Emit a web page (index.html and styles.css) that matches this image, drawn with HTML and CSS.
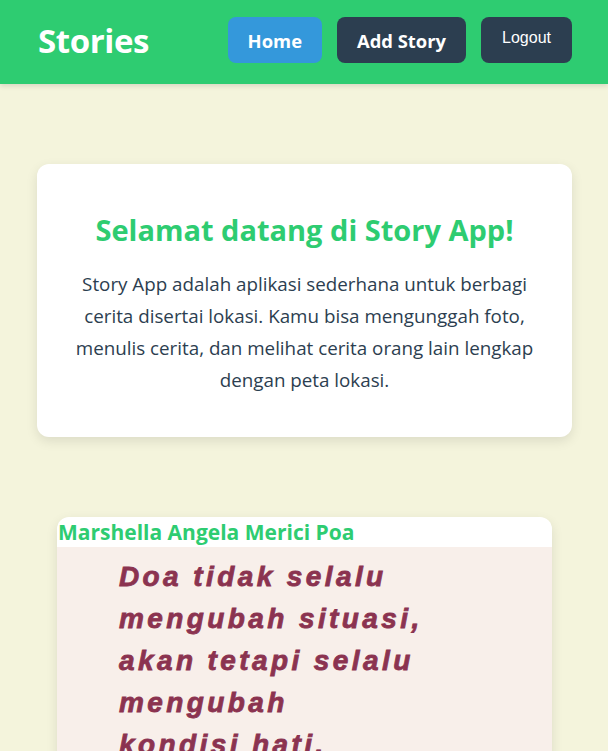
FILE: index.html
```html
<!DOCTYPE html>
<html lang="id">
<head>
<meta charset="utf-8">
<title>Stories</title>
<link rel="stylesheet" href="styles.css">
</head>
<body>
<header class="topbar">
  <div class="brand">Stories</div>
  <nav class="nav">
    <a class="nav-link nav-home" href="#">Home</a>
    <a class="nav-link nav-add" href="#">Add Story</a>
    <button class="nav-logout" type="button">Logout</button>
  </nav>
</header>
<main class="main">
  <section class="welcome">
    <h1 class="welcome-title">Selamat datang di Story App!</h1>
    <p class="welcome-text">Story App adalah aplikasi sederhana untuk berbagi cerita disertai lokasi. Kamu bisa mengunggah foto, menulis cerita, dan melihat cerita orang lain lengkap dengan peta lokasi.</p>
  </section>
  <article class="story">
    <h2 class="story-name">Marshella Angela Merici Poa</h2>
    <div class="story-photo">
      <p class="quote">Doa tidak selalu<br>mengubah situasi,<br>akan tetapi selalu<br>mengubah<br>kondisi hati.</p>
    </div>
  </article>
</main>
</body>
</html>
```
FILE: styles.css
```css
* { box-sizing: border-box; }
html, body { margin: 0; padding: 0; }
body {
  background: #f4f4dc;
  font-family: "Open Sans", "Noto Sans", sans-serif;
  color: #2c3e50;
  overflow: hidden;
}
.topbar {
  height: 84px;
  background: #2ecc71;
  display: flex;
  align-items: center;
  justify-content: space-between;
  padding: 0 36px 4px 38px;
  box-shadow: 0 2px 5px rgba(0,0,0,0.12);
}
.brand {
  color: #fff;
  font-weight: 700;
  font-size: 33px;
  letter-spacing: -0.4px;
}
.nav { display: flex; align-items: center; gap: 15px; }
.nav-link {
  display: flex;
  align-items: center;
  justify-content: center;
  height: 46px;
  padding: 0 20px;
  border-radius: 8px;
  color: #fff;
  text-decoration: none;
  font-weight: 700;
  font-size: 18.4px;
  white-space: nowrap;
}
.nav-home { background: #3498db; }
.nav-add { background: #2c3e50; }
.nav-logout {
  height: 46px;
  padding: 0 21px 4px;
  border: none;
  border-radius: 8px;
  background: #2c3e50;
  color: #fff;
  font-family: "Liberation Sans", Arial, sans-serif;
  font-size: 16px;
}
.main {
  padding: 80px 36px 0 37px;
}
.welcome {
  background: #fff;
  border-radius: 12px;
  box-shadow: 0 4px 12px rgba(0,0,0,0.1);
  padding: 48px 30px 41px;
  text-align: center;
}
.welcome-title {
  margin: 0 0 21px;
  color: #2ecc71;
  font-size: 29px;
  font-weight: 700;
  line-height: 35px;
}
.welcome-text {
  margin: 0;
  font-size: 18.8px;
  line-height: 32px;
  color: #2c3e50;
}
.story {
  margin: 80px 20px 0;
  background: #fff;
  border-radius: 12px;
  box-shadow: 0 4px 12px rgba(0,0,0,0.1);
  overflow: hidden;
}
.story-name {
  margin: 0;
  padding: 1px 0 0 1px;
  height: 30px;
  color: #2ecc71;
  font-size: 21px;
  font-weight: 700;
  line-height: 28px;
}
.story-photo {
  background: #f8efea;
  height: 260px;
  padding: 9px 0 0 62px;
}
.quote {
  margin: 0;
  font-family: "Liberation Sans", Arial, sans-serif;
  font-weight: 700;
  font-style: italic;
  font-size: 28px;
  line-height: 42px;
  letter-spacing: 3.4px;
  -webkit-text-stroke: 0.8px #8b3350;
  color: #8b3350;
}
```
